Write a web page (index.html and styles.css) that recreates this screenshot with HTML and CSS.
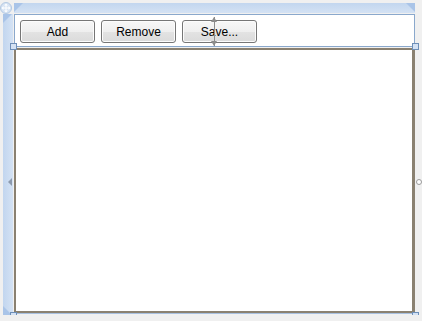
FILE: index.html
```html
<!DOCTYPE html>
<html lang="en">
<head>
    <meta charset="UTF-8">
    <title>Designer</title>
    <link rel="stylesheet" href="styles.css">
</head>
<body>

<div class="designer">
    <div class="corner">
        <svg width="12" height="12" viewBox="0 0 12 12">
            <circle cx="6" cy="6" r="5.5" fill="#d6e3f3" stroke="#b3c8e2"/>
            <path d="M6 1.5 L8 3.5 H4 Z M6 10.5 L8 8.5 H4 Z M1.5 6 L3.5 4 V8 Z M10.5 6 L8.5 4 V8 Z" fill="#ffffff"/>
            <path d="M6 3 V9 M3 6 H9" stroke="#ffffff" stroke-width="1"/>
        </svg>
    </div>
    <div class="top-rail"></div>
    <div class="left-rail">
        <span class="rail-arrow"></span>
    </div>

    <div class="surface">
        <div class="toolbar">
            <button class="btn">Add</button>
            <button class="btn">Remove</button>
            <button class="btn">Save...</button>
            <div class="splitter"></div>
        </div>
        <div class="panel"></div>

        <span class="handle h-tl"></span>
        <span class="handle h-tr"></span>
        <span class="handle h-bl"></span>
        <span class="handle h-br"></span>
        <span class="knob k-right"></span>
        <span class="knob k-bottom"></span>
    </div>
</div>

</body>
</html>
```

FILE: styles.css
```css
body {
    margin: 0;
    background-color: #f0f0f0;
    font-family: 'Liberation Sans', sans-serif;
}

.designer {
    position: relative;
    display: grid;
    grid-template-columns: 11px 401px;
    grid-template-rows: 11px 301px;
    padding: 3px 0 0 3px;
    width: 412px;
    height: 312px;
}

/* move glyph in the top-left corner */
.corner {
    position: absolute;
    left: 0;
    top: 0;
    width: 12px;
    height: 12px;
}

.top-rail {
    grid-column: 2;
    grid-row: 1;
    background: linear-gradient(#c2d6ef, #d4e2f4);
    margin-bottom: 1px;
    position: relative;
}

.top-rail::before,
.top-rail::after {
    content: '';
    position: absolute;
    top: 0;
    border-top: 9px solid #a9c4e8;
}

.top-rail::before {
    left: 0;
    border-right: 9px solid transparent;
}

.top-rail::after {
    right: 0;
    border-left: 9px solid transparent;
}

.left-rail {
    grid-column: 1;
    grid-row: 2;
    background: linear-gradient(90deg, #c2d6ef, #d4e2f4);
    margin-right: 1px;
    padding-top: 34px;
    position: relative;
    display: flex;
    align-items: center;
}

.left-rail::before,
.left-rail::after {
    content: '';
    position: absolute;
    left: 0;
    border-left: 9px solid #a9c4e8;
}

.left-rail::before {
    top: 0;
    border-bottom: 9px solid transparent;
}

.left-rail::after {
    bottom: 0;
    border-top: 9px solid transparent;
}

.rail-arrow {
    margin-left: 5px;
    border-top: 4px solid transparent;
    border-bottom: 4px solid transparent;
    border-right: 4px solid #8c9aae;
}

.surface {
    grid-column: 2;
    grid-row: 2;
    position: relative;
    display: flex;
    flex-direction: column;
}

.toolbar {
    position: relative;
    background-color: #ffffff;
    border: 1px solid #8aa8cc;
    display: flex;
    align-items: flex-start;
    gap: 6px;
    padding: 5px 0 0 5px;
    box-sizing: border-box;
    height: 33px;
}

.btn {
    width: 75px;
    height: 23px;
    padding: 0;
    font-family: 'Liberation Sans', sans-serif;
    font-size: 12px;
    color: #000000;
    background: linear-gradient(#f7f7f7 0%, #efefef 50%, #e3e3e3 51%, #dbdbdb 100%);
    border: 1px solid #767676;
    border-radius: 3px;
    box-shadow: inset 0 0 0 1px #fcfcfc;
}

/* grid splitter adorner */
.splitter {
    position: absolute;
    left: 199px;
    top: 2px;
    width: 1px;
    height: 29px;
    background-color: #8c8c8c;
}

.splitter::before,
.splitter::after {
    content: '';
    position: absolute;
    left: -3px;
    border-left: 3.5px solid transparent;
    border-right: 3.5px solid transparent;
}

.splitter::before {
    top: 0;
    border-bottom: 5px solid #8c8c8c;
}

.splitter::after {
    bottom: 0;
    border-top: 5px solid #8c8c8c;
}

.panel {
    margin-top: 1px;
    flex: 1;
    background-color: #ffffff;
    border: 2px solid #8a8171;
    border-right-width: 3px;
    box-shadow: 0 1px 0 #a9c1e0;
    margin-bottom: 2px;
}

.handle {
    position: absolute;
    width: 5px;
    height: 5px;
    background-color: #d4e2f4;
    border: 1px solid #6e8fb8;
}

.h-tl { left: -4px; top: 29px; }
.h-tr { right: -4px; top: 29px; }
.h-bl { left: -4px; bottom: -4px; }
.h-br { right: -4px; bottom: -4px; }

.knob {
    position: absolute;
    width: 4px;
    height: 4px;
    border: 1px solid #9a9a9a;
    border-radius: 50%;
    background-color: #ffffff;
}

.k-right { right: -7px; top: 165px; }
.k-bottom { left: 197px; bottom: -7px; }
```
